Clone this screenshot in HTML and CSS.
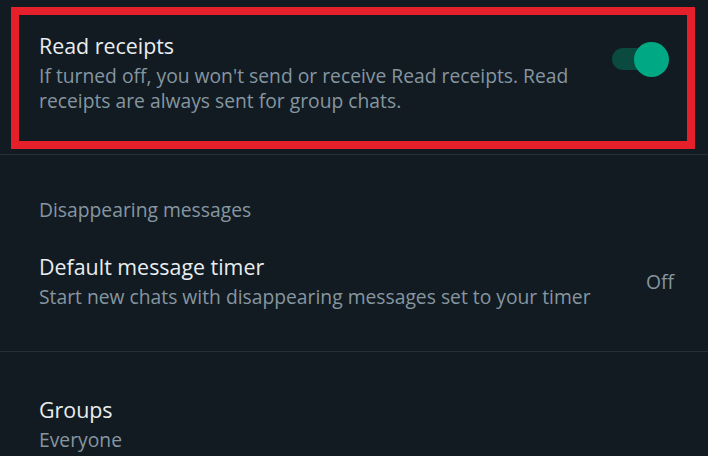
FILE: index.html
```html
<!DOCTYPE html>
<html lang="en">
<head>
<meta charset="UTF-8">
<meta name="viewport" content="width=device-width, initial-scale=1.0">
<title>Privacy settings</title>
<link rel="stylesheet" href="styles.css">
</head>
<body>
<div class="settings">
  <div class="highlight">
    <div class="row row-toggle">
      <div class="row-text">
        <div class="row-title">Read receipts</div>
        <div class="row-sub">If turned off, you won't send or receive Read receipts. Read receipts are always sent for group chats.</div>
      </div>
      <div class="toggle on">
        <span class="toggle-track"></span>
        <span class="toggle-thumb"></span>
      </div>
    </div>
  </div>
  <div class="divider first"></div>

  <div class="section-label">Disappearing messages</div>
  <div class="row row-timer">
    <div class="row-text">
      <div class="row-title">Default message timer</div>
      <div class="row-sub">Start new chats with disappearing messages set to your timer</div>
    </div>
    <div class="row-value">Off</div>
  </div>
  <div class="divider"></div>

  <div class="row row-groups">
    <div class="row-text">
      <div class="row-title">Groups</div>
      <div class="row-sub">Everyone</div>
    </div>
  </div>
</div>
</body>
</html>
```

FILE: styles.css
```css
body {
  margin: 0;
  padding: 0;
  background-color: #121b22;
  font-family: "Open Sans", "Noto Sans", sans-serif;
  overflow: hidden;
}

.settings {
  width: 708px;
  height: 456px;
}

.highlight {
  margin: 7px 13px 0 11px;
  border: 8px solid #e5202a;
}

.row {
  display: flex;
  align-items: center;
  justify-content: space-between;
}

.row-title {
  color: #e9edef;
  font-size: 21.4px;
  line-height: 26px;
}

.row-sub {
  color: #8696a0;
  font-size: 19.3px;
  line-height: 25px;
  margin-top: 4px;
}

.row-toggle {
  padding: 18px 18px 28px 20px;
  align-items: flex-start;
}

.row-toggle .row-sub {
  max-width: 545px;
}

.toggle {
  position: relative;
  width: 57px;
  height: 35px;
  margin-top: 9px;
  flex-shrink: 0;
}

.toggle-track {
  position: absolute;
  left: 0;
  top: 6px;
  width: 50px;
  height: 22px;
  border-radius: 11px;
  background-color: #0b4a3e;
}

.toggle-thumb {
  position: absolute;
  right: 0;
  top: 0;
  width: 35px;
  height: 35px;
  border-radius: 50%;
  background-color: #00a884;
}

.divider {
  height: 1px;
  background-color: #252f36;
}

.divider.first {
  margin-top: 5px;
}

.section-label {
  color: #8696a0;
  font-size: 19.3px;
  line-height: 25px;
  padding: 42px 0 0 39px;
}

.row-timer {
  padding: 31.5px 34px 42.5px 39px;
}

.row-value {
  color: #8696a0;
  font-size: 19.3px;
  line-height: 25px;
}

.row-groups {
  padding: 44.5px 0 0 39px;
}

.row-groups .row-sub {
  margin-top: 4px;
}
```
